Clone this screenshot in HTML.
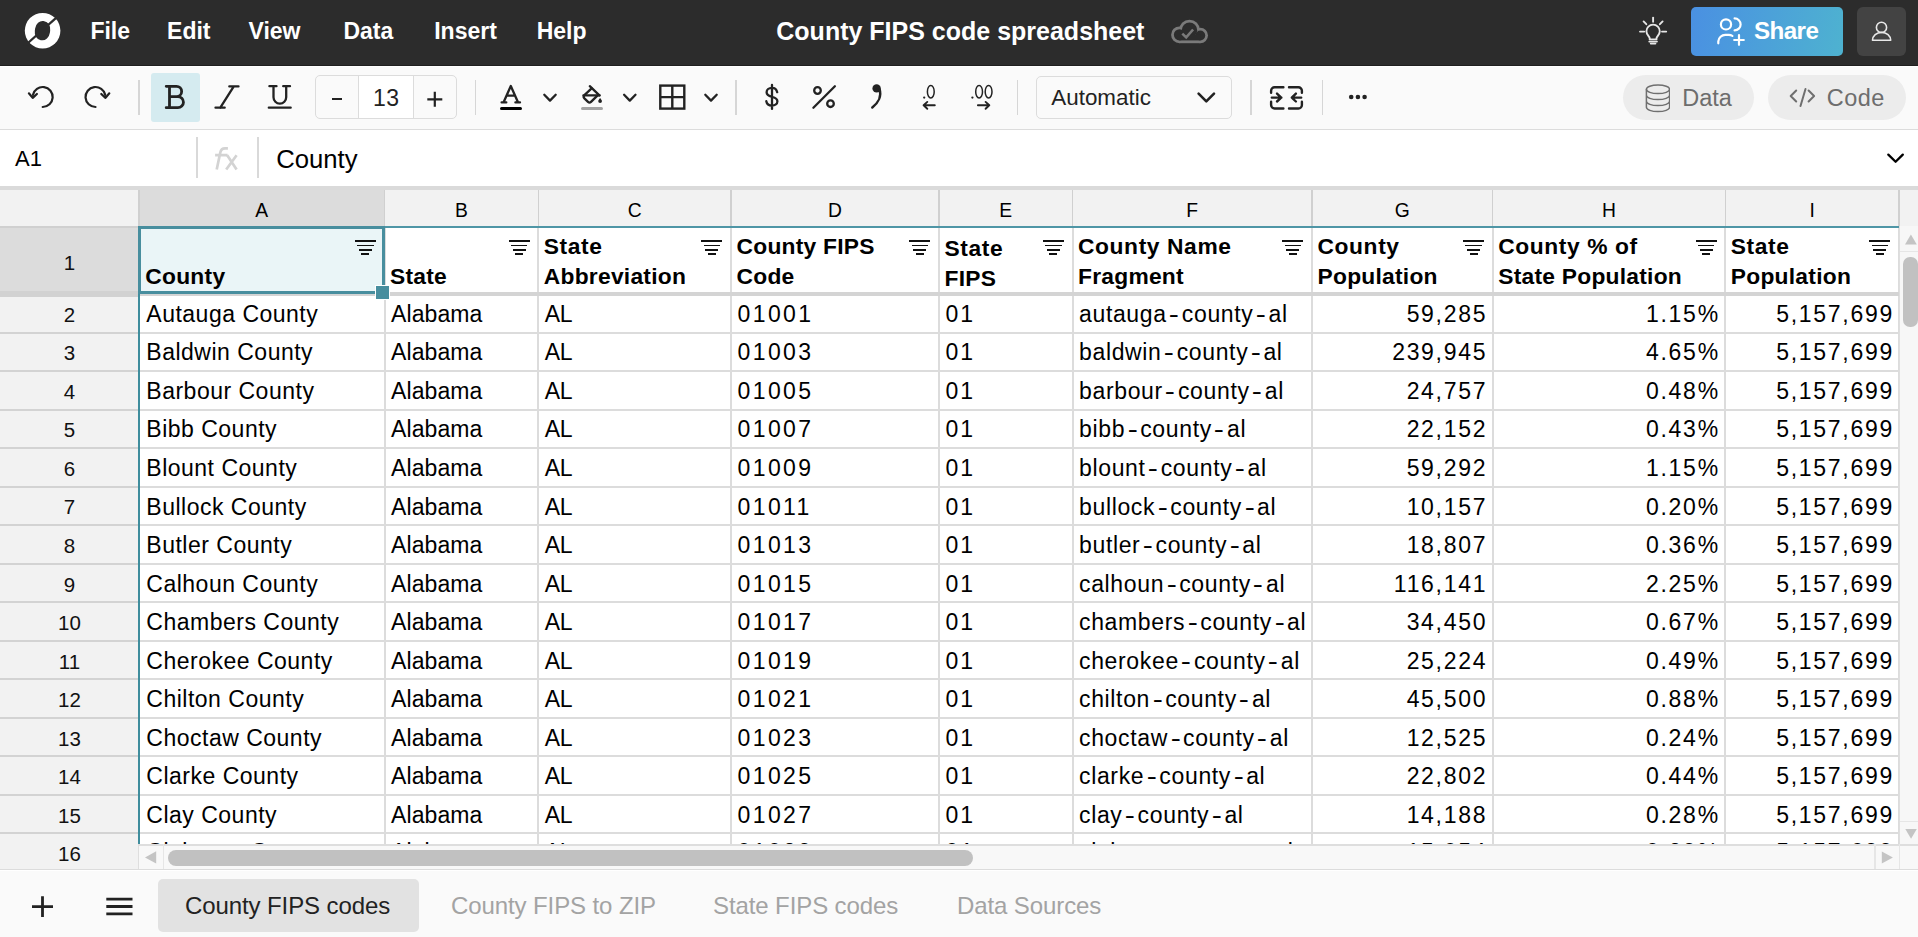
<!DOCTYPE html>
<html><head><meta charset="utf-8"><title>County FIPS code spreadsheet</title>
<style>
html,body{margin:0;padding:0;width:1918px;height:937px;overflow:hidden;background:#fff;}
body{position:relative;font-family:"Liberation Sans", sans-serif;}
.r{position:absolute;}
.t{position:absolute;white-space:pre;line-height:1;font-family:"Liberation Sans", sans-serif;}
.hy{display:inline-block;transform:scaleX(1.32);margin:0 3.2px 0 3.6px;}
</style></head><body>
<div class="r" style="left:0.00px;top:0.00px;width:1918.00px;height:65.70px;background:#2c2c2c;"></div>
<svg class="r" style="left:20px;top:8px;" width="46" height="46" viewBox="20 8 46 46" fill="none"><circle cx="42.6" cy="30.7" r="17.8" fill="#fff"/><rect x="34.9" y="21" width="15.2" height="19.3" rx="7.2" ry="8.6" transform="rotate(8 42.5 30.6)" fill="#2c2c2c"/><line x1="24" y1="46.5" x2="59.5" y2="14.8" stroke="#2c2c2c" stroke-width="2.3"/></svg>
<div class="t" style="top:19.53px;font-size:23px;font-weight:700;color:#fff;left:90.40px;">File</div>
<div class="t" style="top:19.53px;font-size:23px;font-weight:700;color:#fff;left:167.10px;">Edit</div>
<div class="t" style="top:19.53px;font-size:23px;font-weight:700;color:#fff;left:248.50px;">View</div>
<div class="t" style="top:19.53px;font-size:23px;font-weight:700;color:#fff;left:343.40px;">Data</div>
<div class="t" style="top:19.53px;font-size:23px;font-weight:700;color:#fff;left:434.20px;">Insert</div>
<div class="t" style="top:19.53px;font-size:23px;font-weight:700;color:#fff;left:536.70px;">Help</div>
<div class="t" style="top:18.64px;font-size:25px;font-weight:700;color:#fff;left:776.30px;">County FIPS code spreadsheet</div>
<svg class="r" style="left:1165px;top:14px;" width="48" height="34" viewBox="1165 14 48 34" fill="none"><g fill="#7a7a7a"><circle cx="1179.5" cy="34.8" r="8.4"/><circle cx="1189.5" cy="30.2" r="10.5"/><circle cx="1200.3" cy="35.5" r="7.7"/><rect x="1179.5" y="34.8" width="20.8" height="8.4"/></g><g fill="#2c2c2c"><circle cx="1179.5" cy="34.8" r="5.6"/><circle cx="1189.5" cy="30.2" r="7.7"/><circle cx="1200.3" cy="35.5" r="4.9"/><rect x="1179.5" y="34.8" width="20.8" height="5.6"/></g><path d="M1182.3 33.6 l3.9 3.8 l6.9 -7.9" stroke="#7a7a7a" stroke-width="2.6"/></svg>
<svg class="r" style="left:1635px;top:14px;" width="36" height="34" viewBox="1635 14 36 34" fill="none"><g stroke="#e6e6e6" stroke-width="1.9" stroke-linecap="round"><path d="M1649.7 39.4 V38.2 C1649.7 36.6 1646.4 34.9 1646.4 31.3 A6.7 6.7 0 0 1 1659.8 31.3 C1659.8 34.9 1656.5 36.6 1656.5 38.2 V39.4 Z" stroke-linejoin="round"/><line x1="1649.3" y1="41.6" x2="1656.9" y2="41.6"/><line x1="1650.8" y1="43.6" x2="1655.4" y2="43.6"/><line x1="1653.1" y1="17.6" x2="1653.1" y2="21.7"/><line x1="1643.6" y1="21.4" x2="1646.3" y2="24.2"/><line x1="1662.6" y1="21.4" x2="1659.9" y2="24.2"/><line x1="1640" y1="31.6" x2="1644.2" y2="31.6"/><line x1="1662" y1="31.6" x2="1666.2" y2="31.6"/></g></svg>
<div class="r" style="left:1691.00px;top:7.00px;width:152.00px;height:48.60px;background:linear-gradient(100deg,#4a90e2 0%,#4eb2d0 100%);border-radius:5px;"></div>
<svg class="r" style="left:1712px;top:14px;" width="34" height="34" viewBox="1712 14 34 34" fill="none"><g stroke="#fff" stroke-width="2.2" stroke-linecap="round"><circle cx="1726" cy="24.4" r="5.1"/><path d="M1734.6 18.4 a6 6 0 0 1 0 12"/><path d="M1718.3 43.3 v-2 a7 7 0 0 1 7 -6.4 h3.5 a8 8 0 0 1 3.6 1"/><path d="M1739 35.2 v9.6 M1734.2 40 h9.6"/></g></svg>
<div class="t" style="top:19.21px;font-size:24.2px;font-weight:700;color:#fff;letter-spacing:-0.55px;left:1753.90px;">Share</div>
<div class="r" style="left:1857.00px;top:7.00px;width:49.00px;height:48.60px;background:#434343;border-radius:6px;"></div>
<svg class="r" style="left:1866px;top:16px;" width="32" height="32" viewBox="1866 16 32 32" fill="none"><g stroke="#e8e8e8" stroke-width="1.6"><circle cx="1881.5" cy="27.4" r="5.1"/><path d="M1872.5 40.3 a9.1 8 0 0 1 18.2 0 z" stroke-linejoin="round"/></g></svg>
<div class="r" style="left:0.00px;top:65.00px;width:1918.00px;height:64.50px;background:#fafafa;"></div>
<div class="r" style="left:0.00px;top:65.70px;width:1918.00px;height:1.60px;background:#ffffff;"></div>
<div class="r" style="left:0.00px;top:64.70px;width:1918.00px;height:1.00px;background:#1f1f1f;"></div>
<div class="r" style="left:0.00px;top:129.00px;width:1918.00px;height:1.20px;background:#dcdcdc;"></div>
<div class="r" style="left:138.25px;top:80.00px;width:1.50px;height:35.00px;background:#d6d6d6;"></div>
<div class="r" style="left:474.75px;top:80.00px;width:1.50px;height:35.00px;background:#d6d6d6;"></div>
<div class="r" style="left:735.25px;top:80.00px;width:1.50px;height:35.00px;background:#d6d6d6;"></div>
<div class="r" style="left:1016.75px;top:80.00px;width:1.50px;height:35.00px;background:#d6d6d6;"></div>
<div class="r" style="left:1250.25px;top:80.00px;width:1.50px;height:35.00px;background:#d6d6d6;"></div>
<div class="r" style="left:1321.65px;top:80.00px;width:1.50px;height:35.00px;background:#d6d6d6;"></div>
<svg class="r" style="left:20px;top:76px;" width="100" height="40" viewBox="20 76 100 40" fill="none"><g stroke="#222" stroke-width="2.2" stroke-linecap="round" stroke-linejoin="round" fill="none"><path d="M42.7 107 A10 10 0 1 0 32.9 94.9"/><path d="M28.9 93.3 L32.7 97.9 L36.9 94"/><path d="M95.5 107 A10 10 0 1 1 105.3 94.9"/><path d="M109.3 93.3 L105.5 97.9 L101.3 94"/></g></svg>
<div class="r" style="left:151.20px;top:73.00px;width:48.50px;height:48.60px;background:#d5ebf0;border-radius:3px;"></div>
<svg class="r" style="left:150px;top:76px;" width="150" height="40" viewBox="150 76 150 40" fill="none"><g stroke="#222" stroke-linecap="round" stroke-linejoin="round" fill="none"><path stroke-width="2.8" d="M166.2 86.3 H176.5 A5.15 5.15 0 0 1 176.5 96.6 H169.5 M169.5 96.6 H177.9 A5.55 5.55 0 0 1 177.9 107.7 H166.2 M169.5 86.3 V107.7"/><path stroke-width="2.3" d="M229.3 86.4 H238.5 M215.5 107.7 H224.7 M233.8 86.4 L220.3 107.7"/><path stroke-width="2.3" d="M269.4 86.2 H276.5 M283.2 86.2 H290 M273.5 86.2 V97.2 A6.35 6.35 0 0 0 286.2 97.2 V86.2 M268.8 107.7 H290.7"/></g></svg>
<div class="r" style="left:315.40px;top:75.20px;width:141.30px;height:44.30px;background:#fafafa;border:1.2px solid #dcdcdc;border-radius:5px;box-sizing:border-box;"></div>
<div class="r" style="left:358.50px;top:76.20px;width:54.80px;height:42.30px;background:#fff;"></div>
<div class="r" style="left:358.00px;top:75.20px;width:1.20px;height:44.30px;background:#dcdcdc;"></div>
<div class="r" style="left:412.80px;top:75.20px;width:1.20px;height:44.30px;background:#dcdcdc;"></div>
<div class="r" style="left:332.00px;top:98.00px;width:9.80px;height:2.00px;background:#222;"></div>
<div class="t" style="top:86.53px;font-size:23px;font-weight:400;color:#222;letter-spacing:0.3px;left:86.20px;width:600px;text-align:center;">13</div>
<svg class="r" style="left:425px;top:89px;" width="20" height="20" viewBox="425 89 20 20" fill="none"><path d="M434.8 91.8 V106.8 M427.3 99.3 H442.3" stroke="#222" stroke-width="2.2" fill="none"/></svg>
<svg class="r" style="left:495px;top:80px;" width="230" height="34" viewBox="495 80 230 34" fill="none"><g stroke="#222" stroke-width="2.3" stroke-linecap="round" stroke-linejoin="round" fill="none"><path d="M503.6 102.3 L510.8 86 L518 102.3 M506.6 95.6 H515 M501.6 102.4 H506.3 M515.4 102.4 H520"/><path d="M544.3 94.8 L550 100.6 L555.7 94.8"/><path d="M589.8 86.2 L599.4 95.4"/><path d="M591.6 88.4 L584.4 95.2 Q582.9 96.8 584.4 98.4 L588 101.9 Q589.5 103.4 591 101.9 L597.6 95.4"/><path d="M583.4 95.4 H599.6"/><path d="M624.1 94.8 L629.8 100.6 L635.5 94.8"/><path d="M705.3 94.8 L711 100.6 L716.7 94.8"/></g><path d="M600.1 97.9 C599.3 99 598.2 100.1 598.2 101.1 A1.9 1.9 0 0 0 602 101.1 C602 100.1 600.9 99 600.1 97.9z" fill="#222"/></svg>
<div class="r" style="left:499.60px;top:107.20px;width:22.90px;height:3.00px;background:#000;border-radius:2px;"></div>
<div class="r" style="left:581.30px;top:107.30px;width:21.50px;height:2.60px;background:#a3a3a3;border-radius:2px;"></div>
<svg class="r" style="left:655px;top:80px;" width="36" height="34" viewBox="655 80 36 34" fill="none"><g stroke="#222" stroke-width="2.4" fill="none"><rect x="660.3" y="85.6" width="24" height="23"/><path d="M672.3 85.6 v23 M660.3 97.1 h24"/></g></svg>
<svg class="r" style="left:760px;top:80px;" width="24" height="34" viewBox="760 80 24 34" fill="none"><path d="M777.2 92.2 C776.6 89.5 774.5 87.9 772 87.9 C768.8 87.9 766.6 89.8 766.6 92.3 C766.6 95 769 96.1 772 96.8 C775 97.5 777.4 98.7 777.4 101.3 C777.4 103.9 775 105.6 772 105.6 C769 105.6 766.8 104 766.3 101.2 M772 84.9 V108.9" stroke="#222" stroke-width="2.3" stroke-linecap="round" fill="none"/></svg>
<svg class="r" style="left:805px;top:80px;" width="40" height="34" viewBox="805 80 40 34" fill="none"><g stroke="#222" stroke-width="2.3" stroke-linecap="round" fill="none"><path d="M813.4 107.8 L834.9 86.3"/><circle cx="817.5" cy="90.5" r="3.3"/><circle cx="830.5" cy="103.7" r="3.3"/></g></svg>
<svg class="r" style="left:862px;top:80px;" width="30" height="34" viewBox="862 80 30 34" fill="none"><circle cx="876.6" cy="88.4" r="4.2" fill="#222"/><path d="M879.6 89.5 C881.6 95.5 878.8 102.3 872.3 107.4" stroke="#222" stroke-width="2.5" stroke-linecap="round" fill="none"/></svg>
<svg class="r" style="left:915px;top:80px;" width="85" height="34" viewBox="915 80 85 34" fill="none"><g stroke="#222" stroke-linecap="round" stroke-linejoin="round" fill="none"><ellipse cx="930.8" cy="91.7" rx="3.4" ry="6.3" stroke-width="1.5"/><ellipse cx="979.1" cy="91.7" rx="3.4" ry="6.3" stroke-width="1.5"/><ellipse cx="988.6" cy="91.7" rx="3.4" ry="6.3" stroke-width="1.5"/><path stroke-width="1.9" d="M923.6 105.3 H934.8 M927.3 101.9 L923.6 105.3 L927.3 108.8"/><path stroke-width="1.9" d="M977.9 105.3 H989.3 M985.6 101.9 L989.3 105.3 L985.6 108.8"/></g><circle cx="924.2" cy="97.6" r="1.15" fill="#222"/><circle cx="972.4" cy="97.6" r="1.15" fill="#222"/></svg>
<div class="r" style="left:1036.20px;top:76.30px;width:195.60px;height:43.20px;background:#fafafa;border:1.2px solid #dcdcdc;border-radius:5px;box-sizing:border-box;"></div>
<div class="t" style="top:87.04px;font-size:22.4px;font-weight:400;color:#222;left:1051.30px;">Automatic</div>
<svg class="r" style="left:1190px;top:85px;" width="32" height="24" viewBox="1190 85 32 24" fill="none"><path d="M1198.6 93.7 l7.7 7.7 l7.7 -7.7" stroke="#222" stroke-width="2.6" stroke-linecap="round" stroke-linejoin="round" fill="none"/></svg>
<svg class="r" style="left:1265px;top:80px;" width="45" height="34" viewBox="1265 80 45 34" fill="none"><g stroke="#222" stroke-width="2.4" stroke-linecap="round" stroke-linejoin="round" fill="none"><path d="M1283.4 87.3 H1274.6 A3.5 3.5 0 0 0 1271.1 90.8 V92.7 M1271.1 101.8 V105 A3.5 3.5 0 0 0 1274.6 108.5 H1283.4"/><path d="M1289 87.3 H1298.4 A3.5 3.5 0 0 1 1301.9 90.8 V92.7 M1301.9 101.8 V105 A3.5 3.5 0 0 1 1298.4 108.5 H1289"/><path d="M1271.8 97.6 H1281.4 M1277 93.6 L1281.2 97.6 L1277 101.5 M1301.2 97.6 H1291.8 M1295.9 93.6 L1291.8 97.6 L1295.9 101.5"/></g></svg>
<svg class="r" style="left:1345px;top:90px;" width="26" height="14" viewBox="1345 90 26 14" fill="none"><g fill="#222"><circle cx="1351.2" cy="97" r="2.3"/><circle cx="1357.9" cy="97" r="2.3"/><circle cx="1364.6" cy="97" r="2.3"/></g></svg>
<div class="r" style="left:1623.00px;top:75.00px;width:130.60px;height:45.00px;background:#ececec;border-radius:23px;"></div>
<div class="r" style="left:1768.00px;top:75.00px;width:138.00px;height:45.00px;background:#ececec;border-radius:23px;"></div>
<svg class="r" style="left:1640px;top:80px;" width="30" height="34" viewBox="1640 80 30 34" fill="none"><g stroke="#6f6f6f" stroke-width="1.5" fill="none"><ellipse cx="1658" cy="89.3" rx="11.6" ry="4.3"/><path d="M1646.4 89.3 v18 a11.6 4.3 0 0 0 23.2 0 v-18 M1646.4 95.3 a11.6 4.3 0 0 0 23.2 0 M1646.4 101.3 a11.6 4.3 0 0 0 23.2 0"/></g></svg>
<div class="t" style="top:87.31px;font-size:23.5px;font-weight:400;color:#6d6d6d;left:1682.20px;">Data</div>
<svg class="r" style="left:1785px;top:82px;" width="36" height="30" viewBox="1785 82 36 30" fill="none"><g stroke="#6f6f6f" stroke-width="2" stroke-linecap="round" stroke-linejoin="round" fill="none"><path d="M1796.2 90.5 l-5.5 5.5 l5.5 5.5 M1808.6 90.5 l5.5 5.5 l-5.5 5.5 M1805.5 89 l-5 17"/></g></svg>
<div class="t" style="top:87.31px;font-size:23.5px;font-weight:400;color:#6d6d6d;letter-spacing:0.5px;left:1826.70px;">Code</div>
<div class="r" style="left:0.00px;top:130.20px;width:1918.00px;height:56.20px;background:#fff;"></div>
<div class="t" style="top:147.58px;font-size:22px;font-weight:400;color:#000;left:15.00px;">A1</div>
<div class="r" style="left:196.30px;top:137.40px;width:1.50px;height:41.00px;background:#d9d9d9;"></div>
<div class="r" style="left:257.30px;top:137.40px;width:1.50px;height:41.00px;background:#d9d9d9;"></div>
<svg class="r" style="left:210px;top:142px;" width="32" height="32" viewBox="210 142 32 32" fill="none"><g stroke="#d3d3d3" stroke-width="2.7" fill="none"><path d="M227.9 148.4 H225 C222.3 148.4 220.8 150 220.3 152.5 L216.7 169.5 M215.1 155.2 H227.6"/><path d="M227.2 155.2 L236.6 169.5 M236.6 155.2 L226.2 169.5"/></g></svg>
<div class="t" style="top:147.24px;font-size:25.7px;font-weight:400;color:#000;left:276.20px;">County</div>
<svg class="r" style="left:1880px;top:145px;" width="30" height="26" viewBox="1880 145 30 26" fill="none"><path d="M1888.3 154.6 l7.3 7.2 l7.2 -7.2" stroke="#000" stroke-width="2.3" stroke-linecap="round" stroke-linejoin="round" fill="none"/></svg>
<div class="r" style="left:0.00px;top:186.40px;width:1918.00px;height:3.80px;background:#dadada;"></div>
<div class="r" style="left:0.00px;top:190.20px;width:1918.00px;height:36.00px;background:#f2f2f2;"></div>
<div class="r" style="left:139.00px;top:190.20px;width:245.50px;height:36.00px;background:#dcdcdc;"></div>
<div class="r" style="left:138.25px;top:190.20px;width:1.50px;height:36.00px;background:#d0d0d0;"></div>
<div class="r" style="left:383.75px;top:190.20px;width:1.50px;height:36.00px;background:#d0d0d0;"></div>
<div class="r" style="left:537.55px;top:190.20px;width:1.50px;height:36.00px;background:#d0d0d0;"></div>
<div class="r" style="left:730.25px;top:190.20px;width:1.50px;height:36.00px;background:#d0d0d0;"></div>
<div class="r" style="left:938.25px;top:190.20px;width:1.50px;height:36.00px;background:#d0d0d0;"></div>
<div class="r" style="left:1071.75px;top:190.20px;width:1.50px;height:36.00px;background:#d0d0d0;"></div>
<div class="r" style="left:1311.25px;top:190.20px;width:1.50px;height:36.00px;background:#d0d0d0;"></div>
<div class="r" style="left:1491.95px;top:190.20px;width:1.50px;height:36.00px;background:#d0d0d0;"></div>
<div class="r" style="left:1724.55px;top:190.20px;width:1.50px;height:36.00px;background:#d0d0d0;"></div>
<div class="r" style="left:1898.25px;top:190.20px;width:1.50px;height:36.00px;background:#d0d0d0;"></div>
<div class="t" style="top:200.86px;font-size:19.3px;font-weight:400;color:#000;left:-38.25px;width:600px;text-align:center;">A</div>
<div class="t" style="top:200.86px;font-size:19.3px;font-weight:400;color:#000;left:161.40px;width:600px;text-align:center;">B</div>
<div class="t" style="top:200.86px;font-size:19.3px;font-weight:400;color:#000;left:334.65px;width:600px;text-align:center;">C</div>
<div class="t" style="top:200.86px;font-size:19.3px;font-weight:400;color:#000;left:535.00px;width:600px;text-align:center;">D</div>
<div class="t" style="top:200.86px;font-size:19.3px;font-weight:400;color:#000;left:705.75px;width:600px;text-align:center;">E</div>
<div class="t" style="top:200.86px;font-size:19.3px;font-weight:400;color:#000;left:892.25px;width:600px;text-align:center;">F</div>
<div class="t" style="top:200.86px;font-size:19.3px;font-weight:400;color:#000;left:1102.35px;width:600px;text-align:center;">G</div>
<div class="t" style="top:200.86px;font-size:19.3px;font-weight:400;color:#000;left:1309.00px;width:600px;text-align:center;">H</div>
<div class="t" style="top:200.86px;font-size:19.3px;font-weight:400;color:#000;left:1512.15px;width:600px;text-align:center;">I</div>
<div class="r" style="left:0.00px;top:226.20px;width:139.00px;height:643.10px;background:#f2f2f2;"></div>
<div class="r" style="left:139.00px;top:226.20px;width:1760.00px;height:618.10px;background:#fff;"></div>
<div class="r" style="left:0.00px;top:226.20px;width:139.00px;height:65.00px;background:#dcdcdc;"></div>
<div class="r" style="left:0.00px;top:226.00px;width:139.00px;height:2.00px;background:#d0d0d0;"></div>
<div class="t" style="top:252.85px;font-size:20.5px;font-weight:400;color:#111;left:-230.60px;width:600px;text-align:center;">1</div>
<div class="r" style="left:139.00px;top:226.20px;width:245.50px;height:68.00px;background:#eaf5f7;"></div>
<div class="t" style="top:265.30px;font-size:22.8px;font-weight:700;color:#000;letter-spacing:0.25px;left:145.30px;">County</div>
<div class="r" style="left:354.90px;top:240.20px;width:21.00px;height:1.70px;background:#111;"></div>
<div class="r" style="left:357.10px;top:244.60px;width:16.60px;height:1.70px;background:#111;"></div>
<div class="r" style="left:358.80px;top:249.00px;width:13.20px;height:1.70px;background:#111;"></div>
<div class="r" style="left:361.40px;top:253.20px;width:8.00px;height:1.70px;background:#111;"></div>
<div class="t" style="top:265.30px;font-size:22.8px;font-weight:700;color:#000;letter-spacing:0.25px;left:390.00px;">State</div>
<div class="r" style="left:508.70px;top:240.20px;width:21.00px;height:1.70px;background:#111;"></div>
<div class="r" style="left:510.90px;top:244.60px;width:16.60px;height:1.70px;background:#111;"></div>
<div class="r" style="left:512.60px;top:249.00px;width:13.20px;height:1.70px;background:#111;"></div>
<div class="r" style="left:515.20px;top:253.20px;width:8.00px;height:1.70px;background:#111;"></div>
<div class="t" style="top:235.30px;font-size:22.8px;font-weight:700;color:#000;letter-spacing:0.6px;left:543.80px;">State</div>
<div class="t" style="top:265.30px;font-size:22.8px;font-weight:700;color:#000;letter-spacing:0.25px;left:543.80px;">Abbreviation</div>
<div class="r" style="left:701.40px;top:240.20px;width:21.00px;height:1.70px;background:#111;"></div>
<div class="r" style="left:703.60px;top:244.60px;width:16.60px;height:1.70px;background:#111;"></div>
<div class="r" style="left:705.30px;top:249.00px;width:13.20px;height:1.70px;background:#111;"></div>
<div class="r" style="left:707.90px;top:253.20px;width:8.00px;height:1.70px;background:#111;"></div>
<div class="t" style="top:235.30px;font-size:22.8px;font-weight:700;color:#000;letter-spacing:0.25px;left:736.50px;">County FIPS</div>
<div class="t" style="top:265.30px;font-size:22.8px;font-weight:700;color:#000;letter-spacing:0.25px;left:736.50px;">Code</div>
<div class="r" style="left:909.40px;top:240.20px;width:21.00px;height:1.70px;background:#111;"></div>
<div class="r" style="left:911.60px;top:244.60px;width:16.60px;height:1.70px;background:#111;"></div>
<div class="r" style="left:913.30px;top:249.00px;width:13.20px;height:1.70px;background:#111;"></div>
<div class="r" style="left:915.90px;top:253.20px;width:8.00px;height:1.70px;background:#111;"></div>
<div class="t" style="top:236.90px;font-size:22.8px;font-weight:700;color:#000;letter-spacing:0.6px;left:944.50px;">State</div>
<div class="t" style="top:266.90px;font-size:22.8px;font-weight:700;color:#000;letter-spacing:0.25px;left:944.50px;">FIPS</div>
<div class="r" style="left:1042.90px;top:240.20px;width:21.00px;height:1.70px;background:#111;"></div>
<div class="r" style="left:1045.10px;top:244.60px;width:16.60px;height:1.70px;background:#111;"></div>
<div class="r" style="left:1046.80px;top:249.00px;width:13.20px;height:1.70px;background:#111;"></div>
<div class="r" style="left:1049.40px;top:253.20px;width:8.00px;height:1.70px;background:#111;"></div>
<div class="t" style="top:235.30px;font-size:22.8px;font-weight:700;color:#000;letter-spacing:0.6px;left:1078.00px;">County Name</div>
<div class="t" style="top:265.30px;font-size:22.8px;font-weight:700;color:#000;letter-spacing:0.25px;left:1078.00px;">Fragment</div>
<div class="r" style="left:1282.40px;top:240.20px;width:21.00px;height:1.70px;background:#111;"></div>
<div class="r" style="left:1284.60px;top:244.60px;width:16.60px;height:1.70px;background:#111;"></div>
<div class="r" style="left:1286.30px;top:249.00px;width:13.20px;height:1.70px;background:#111;"></div>
<div class="r" style="left:1288.90px;top:253.20px;width:8.00px;height:1.70px;background:#111;"></div>
<div class="t" style="top:235.30px;font-size:22.8px;font-weight:700;color:#000;letter-spacing:0.6px;left:1317.50px;">County</div>
<div class="t" style="top:265.30px;font-size:22.8px;font-weight:700;color:#000;letter-spacing:0.25px;left:1317.50px;">Population</div>
<div class="r" style="left:1463.10px;top:240.20px;width:21.00px;height:1.70px;background:#111;"></div>
<div class="r" style="left:1465.30px;top:244.60px;width:16.60px;height:1.70px;background:#111;"></div>
<div class="r" style="left:1467.00px;top:249.00px;width:13.20px;height:1.70px;background:#111;"></div>
<div class="r" style="left:1469.60px;top:253.20px;width:8.00px;height:1.70px;background:#111;"></div>
<div class="t" style="top:235.30px;font-size:22.8px;font-weight:700;color:#000;letter-spacing:0.6px;left:1498.20px;">County % of</div>
<div class="t" style="top:265.30px;font-size:22.8px;font-weight:700;color:#000;letter-spacing:0.25px;left:1498.20px;">State Population</div>
<div class="r" style="left:1695.70px;top:240.20px;width:21.00px;height:1.70px;background:#111;"></div>
<div class="r" style="left:1697.90px;top:244.60px;width:16.60px;height:1.70px;background:#111;"></div>
<div class="r" style="left:1699.60px;top:249.00px;width:13.20px;height:1.70px;background:#111;"></div>
<div class="r" style="left:1702.20px;top:253.20px;width:8.00px;height:1.70px;background:#111;"></div>
<div class="t" style="top:235.30px;font-size:22.8px;font-weight:700;color:#000;letter-spacing:0.6px;left:1730.80px;">State</div>
<div class="t" style="top:265.30px;font-size:22.8px;font-weight:700;color:#000;letter-spacing:0.25px;left:1730.80px;">Population</div>
<div class="r" style="left:1869.40px;top:240.20px;width:21.00px;height:1.70px;background:#111;"></div>
<div class="r" style="left:1871.60px;top:244.60px;width:16.60px;height:1.70px;background:#111;"></div>
<div class="r" style="left:1873.30px;top:249.00px;width:13.20px;height:1.70px;background:#111;"></div>
<div class="r" style="left:1875.90px;top:253.20px;width:8.00px;height:1.70px;background:#111;"></div>
<div class="r" style="left:0;top:0;width:1918px;height:845px;overflow:hidden">
<div class="t" style="top:302.83px;font-size:23px;font-weight:400;color:#000;letter-spacing:0.5px;left:146.30px;">Autauga County</div>
<div class="t" style="top:302.83px;font-size:23px;font-weight:400;color:#000;letter-spacing:0.1px;left:391.00px;">Alabama</div>
<div class="t" style="top:302.83px;font-size:23px;font-weight:400;color:#000;letter-spacing:-0.5px;left:544.80px;">AL</div>
<div class="t" style="top:302.83px;font-size:23px;font-weight:400;color:#000;letter-spacing:2.4px;left:737.50px;">01001</div>
<div class="t" style="top:302.83px;font-size:23px;font-weight:400;color:#000;letter-spacing:1.9px;left:945.50px;">01</div>
<div class="t" style="top:302.83px;font-size:23px;font-weight:400;color:#000;letter-spacing:0.65px;left:1079.00px;">autauga<span class="hy">-</span>county<span class="hy">-</span>al</div>
<div class="t" style="top:302.83px;font-size:23px;font-weight:400;color:#000;letter-spacing:1.7px;right:432.50px;margin-right:-1.7px;">59,285</div>
<div class="t" style="top:302.83px;font-size:23px;font-weight:400;color:#000;letter-spacing:1.75px;right:199.90px;margin-right:-1.75px;">1.15%</div>
<div class="t" style="top:302.83px;font-size:23px;font-weight:400;color:#000;letter-spacing:1.7px;right:25.80px;margin-right:-1.7px;">5,157,699</div>
<div class="t" style="top:341.38px;font-size:23px;font-weight:400;color:#000;letter-spacing:0.5px;left:146.30px;">Baldwin County</div>
<div class="t" style="top:341.38px;font-size:23px;font-weight:400;color:#000;letter-spacing:0.1px;left:391.00px;">Alabama</div>
<div class="t" style="top:341.38px;font-size:23px;font-weight:400;color:#000;letter-spacing:-0.5px;left:544.80px;">AL</div>
<div class="t" style="top:341.38px;font-size:23px;font-weight:400;color:#000;letter-spacing:2.4px;left:737.50px;">01003</div>
<div class="t" style="top:341.38px;font-size:23px;font-weight:400;color:#000;letter-spacing:1.9px;left:945.50px;">01</div>
<div class="t" style="top:341.38px;font-size:23px;font-weight:400;color:#000;letter-spacing:0.65px;left:1079.00px;">baldwin<span class="hy">-</span>county<span class="hy">-</span>al</div>
<div class="t" style="top:341.38px;font-size:23px;font-weight:400;color:#000;letter-spacing:1.7px;right:432.50px;margin-right:-1.7px;">239,945</div>
<div class="t" style="top:341.38px;font-size:23px;font-weight:400;color:#000;letter-spacing:1.75px;right:199.90px;margin-right:-1.75px;">4.65%</div>
<div class="t" style="top:341.38px;font-size:23px;font-weight:400;color:#000;letter-spacing:1.7px;right:25.80px;margin-right:-1.7px;">5,157,699</div>
<div class="t" style="top:379.93px;font-size:23px;font-weight:400;color:#000;letter-spacing:0.5px;left:146.30px;">Barbour County</div>
<div class="t" style="top:379.93px;font-size:23px;font-weight:400;color:#000;letter-spacing:0.1px;left:391.00px;">Alabama</div>
<div class="t" style="top:379.93px;font-size:23px;font-weight:400;color:#000;letter-spacing:-0.5px;left:544.80px;">AL</div>
<div class="t" style="top:379.93px;font-size:23px;font-weight:400;color:#000;letter-spacing:2.4px;left:737.50px;">01005</div>
<div class="t" style="top:379.93px;font-size:23px;font-weight:400;color:#000;letter-spacing:1.9px;left:945.50px;">01</div>
<div class="t" style="top:379.93px;font-size:23px;font-weight:400;color:#000;letter-spacing:0.65px;left:1079.00px;">barbour<span class="hy">-</span>county<span class="hy">-</span>al</div>
<div class="t" style="top:379.93px;font-size:23px;font-weight:400;color:#000;letter-spacing:1.7px;right:432.50px;margin-right:-1.7px;">24,757</div>
<div class="t" style="top:379.93px;font-size:23px;font-weight:400;color:#000;letter-spacing:1.75px;right:199.90px;margin-right:-1.75px;">0.48%</div>
<div class="t" style="top:379.93px;font-size:23px;font-weight:400;color:#000;letter-spacing:1.7px;right:25.80px;margin-right:-1.7px;">5,157,699</div>
<div class="t" style="top:418.48px;font-size:23px;font-weight:400;color:#000;letter-spacing:0.5px;left:146.30px;">Bibb County</div>
<div class="t" style="top:418.48px;font-size:23px;font-weight:400;color:#000;letter-spacing:0.1px;left:391.00px;">Alabama</div>
<div class="t" style="top:418.48px;font-size:23px;font-weight:400;color:#000;letter-spacing:-0.5px;left:544.80px;">AL</div>
<div class="t" style="top:418.48px;font-size:23px;font-weight:400;color:#000;letter-spacing:2.4px;left:737.50px;">01007</div>
<div class="t" style="top:418.48px;font-size:23px;font-weight:400;color:#000;letter-spacing:1.9px;left:945.50px;">01</div>
<div class="t" style="top:418.48px;font-size:23px;font-weight:400;color:#000;letter-spacing:0.65px;left:1079.00px;">bibb<span class="hy">-</span>county<span class="hy">-</span>al</div>
<div class="t" style="top:418.48px;font-size:23px;font-weight:400;color:#000;letter-spacing:1.7px;right:432.50px;margin-right:-1.7px;">22,152</div>
<div class="t" style="top:418.48px;font-size:23px;font-weight:400;color:#000;letter-spacing:1.75px;right:199.90px;margin-right:-1.75px;">0.43%</div>
<div class="t" style="top:418.48px;font-size:23px;font-weight:400;color:#000;letter-spacing:1.7px;right:25.80px;margin-right:-1.7px;">5,157,699</div>
<div class="t" style="top:457.03px;font-size:23px;font-weight:400;color:#000;letter-spacing:0.5px;left:146.30px;">Blount County</div>
<div class="t" style="top:457.03px;font-size:23px;font-weight:400;color:#000;letter-spacing:0.1px;left:391.00px;">Alabama</div>
<div class="t" style="top:457.03px;font-size:23px;font-weight:400;color:#000;letter-spacing:-0.5px;left:544.80px;">AL</div>
<div class="t" style="top:457.03px;font-size:23px;font-weight:400;color:#000;letter-spacing:2.4px;left:737.50px;">01009</div>
<div class="t" style="top:457.03px;font-size:23px;font-weight:400;color:#000;letter-spacing:1.9px;left:945.50px;">01</div>
<div class="t" style="top:457.03px;font-size:23px;font-weight:400;color:#000;letter-spacing:0.65px;left:1079.00px;">blount<span class="hy">-</span>county<span class="hy">-</span>al</div>
<div class="t" style="top:457.03px;font-size:23px;font-weight:400;color:#000;letter-spacing:1.7px;right:432.50px;margin-right:-1.7px;">59,292</div>
<div class="t" style="top:457.03px;font-size:23px;font-weight:400;color:#000;letter-spacing:1.75px;right:199.90px;margin-right:-1.75px;">1.15%</div>
<div class="t" style="top:457.03px;font-size:23px;font-weight:400;color:#000;letter-spacing:1.7px;right:25.80px;margin-right:-1.7px;">5,157,699</div>
<div class="t" style="top:495.58px;font-size:23px;font-weight:400;color:#000;letter-spacing:0.5px;left:146.30px;">Bullock County</div>
<div class="t" style="top:495.58px;font-size:23px;font-weight:400;color:#000;letter-spacing:0.1px;left:391.00px;">Alabama</div>
<div class="t" style="top:495.58px;font-size:23px;font-weight:400;color:#000;letter-spacing:-0.5px;left:544.80px;">AL</div>
<div class="t" style="top:495.58px;font-size:23px;font-weight:400;color:#000;letter-spacing:2.4px;left:737.50px;">01011</div>
<div class="t" style="top:495.58px;font-size:23px;font-weight:400;color:#000;letter-spacing:1.9px;left:945.50px;">01</div>
<div class="t" style="top:495.58px;font-size:23px;font-weight:400;color:#000;letter-spacing:0.65px;left:1079.00px;">bullock<span class="hy">-</span>county<span class="hy">-</span>al</div>
<div class="t" style="top:495.58px;font-size:23px;font-weight:400;color:#000;letter-spacing:1.7px;right:432.50px;margin-right:-1.7px;">10,157</div>
<div class="t" style="top:495.58px;font-size:23px;font-weight:400;color:#000;letter-spacing:1.75px;right:199.90px;margin-right:-1.75px;">0.20%</div>
<div class="t" style="top:495.58px;font-size:23px;font-weight:400;color:#000;letter-spacing:1.7px;right:25.80px;margin-right:-1.7px;">5,157,699</div>
<div class="t" style="top:534.13px;font-size:23px;font-weight:400;color:#000;letter-spacing:0.5px;left:146.30px;">Butler County</div>
<div class="t" style="top:534.13px;font-size:23px;font-weight:400;color:#000;letter-spacing:0.1px;left:391.00px;">Alabama</div>
<div class="t" style="top:534.13px;font-size:23px;font-weight:400;color:#000;letter-spacing:-0.5px;left:544.80px;">AL</div>
<div class="t" style="top:534.13px;font-size:23px;font-weight:400;color:#000;letter-spacing:2.4px;left:737.50px;">01013</div>
<div class="t" style="top:534.13px;font-size:23px;font-weight:400;color:#000;letter-spacing:1.9px;left:945.50px;">01</div>
<div class="t" style="top:534.13px;font-size:23px;font-weight:400;color:#000;letter-spacing:0.65px;left:1079.00px;">butler<span class="hy">-</span>county<span class="hy">-</span>al</div>
<div class="t" style="top:534.13px;font-size:23px;font-weight:400;color:#000;letter-spacing:1.7px;right:432.50px;margin-right:-1.7px;">18,807</div>
<div class="t" style="top:534.13px;font-size:23px;font-weight:400;color:#000;letter-spacing:1.75px;right:199.90px;margin-right:-1.75px;">0.36%</div>
<div class="t" style="top:534.13px;font-size:23px;font-weight:400;color:#000;letter-spacing:1.7px;right:25.80px;margin-right:-1.7px;">5,157,699</div>
<div class="t" style="top:572.68px;font-size:23px;font-weight:400;color:#000;letter-spacing:0.5px;left:146.30px;">Calhoun County</div>
<div class="t" style="top:572.68px;font-size:23px;font-weight:400;color:#000;letter-spacing:0.1px;left:391.00px;">Alabama</div>
<div class="t" style="top:572.68px;font-size:23px;font-weight:400;color:#000;letter-spacing:-0.5px;left:544.80px;">AL</div>
<div class="t" style="top:572.68px;font-size:23px;font-weight:400;color:#000;letter-spacing:2.4px;left:737.50px;">01015</div>
<div class="t" style="top:572.68px;font-size:23px;font-weight:400;color:#000;letter-spacing:1.9px;left:945.50px;">01</div>
<div class="t" style="top:572.68px;font-size:23px;font-weight:400;color:#000;letter-spacing:0.65px;left:1079.00px;">calhoun<span class="hy">-</span>county<span class="hy">-</span>al</div>
<div class="t" style="top:572.68px;font-size:23px;font-weight:400;color:#000;letter-spacing:1.7px;right:432.50px;margin-right:-1.7px;">116,141</div>
<div class="t" style="top:572.68px;font-size:23px;font-weight:400;color:#000;letter-spacing:1.75px;right:199.90px;margin-right:-1.75px;">2.25%</div>
<div class="t" style="top:572.68px;font-size:23px;font-weight:400;color:#000;letter-spacing:1.7px;right:25.80px;margin-right:-1.7px;">5,157,699</div>
<div class="t" style="top:611.23px;font-size:23px;font-weight:400;color:#000;letter-spacing:0.5px;left:146.30px;">Chambers County</div>
<div class="t" style="top:611.23px;font-size:23px;font-weight:400;color:#000;letter-spacing:0.1px;left:391.00px;">Alabama</div>
<div class="t" style="top:611.23px;font-size:23px;font-weight:400;color:#000;letter-spacing:-0.5px;left:544.80px;">AL</div>
<div class="t" style="top:611.23px;font-size:23px;font-weight:400;color:#000;letter-spacing:2.4px;left:737.50px;">01017</div>
<div class="t" style="top:611.23px;font-size:23px;font-weight:400;color:#000;letter-spacing:1.9px;left:945.50px;">01</div>
<div class="t" style="top:611.23px;font-size:23px;font-weight:400;color:#000;letter-spacing:0.65px;left:1079.00px;">chambers<span class="hy">-</span>county<span class="hy">-</span>al</div>
<div class="t" style="top:611.23px;font-size:23px;font-weight:400;color:#000;letter-spacing:1.7px;right:432.50px;margin-right:-1.7px;">34,450</div>
<div class="t" style="top:611.23px;font-size:23px;font-weight:400;color:#000;letter-spacing:1.75px;right:199.90px;margin-right:-1.75px;">0.67%</div>
<div class="t" style="top:611.23px;font-size:23px;font-weight:400;color:#000;letter-spacing:1.7px;right:25.80px;margin-right:-1.7px;">5,157,699</div>
<div class="t" style="top:649.78px;font-size:23px;font-weight:400;color:#000;letter-spacing:0.5px;left:146.30px;">Cherokee County</div>
<div class="t" style="top:649.78px;font-size:23px;font-weight:400;color:#000;letter-spacing:0.1px;left:391.00px;">Alabama</div>
<div class="t" style="top:649.78px;font-size:23px;font-weight:400;color:#000;letter-spacing:-0.5px;left:544.80px;">AL</div>
<div class="t" style="top:649.78px;font-size:23px;font-weight:400;color:#000;letter-spacing:2.4px;left:737.50px;">01019</div>
<div class="t" style="top:649.78px;font-size:23px;font-weight:400;color:#000;letter-spacing:1.9px;left:945.50px;">01</div>
<div class="t" style="top:649.78px;font-size:23px;font-weight:400;color:#000;letter-spacing:0.65px;left:1079.00px;">cherokee<span class="hy">-</span>county<span class="hy">-</span>al</div>
<div class="t" style="top:649.78px;font-size:23px;font-weight:400;color:#000;letter-spacing:1.7px;right:432.50px;margin-right:-1.7px;">25,224</div>
<div class="t" style="top:649.78px;font-size:23px;font-weight:400;color:#000;letter-spacing:1.75px;right:199.90px;margin-right:-1.75px;">0.49%</div>
<div class="t" style="top:649.78px;font-size:23px;font-weight:400;color:#000;letter-spacing:1.7px;right:25.80px;margin-right:-1.7px;">5,157,699</div>
<div class="t" style="top:688.33px;font-size:23px;font-weight:400;color:#000;letter-spacing:0.5px;left:146.30px;">Chilton County</div>
<div class="t" style="top:688.33px;font-size:23px;font-weight:400;color:#000;letter-spacing:0.1px;left:391.00px;">Alabama</div>
<div class="t" style="top:688.33px;font-size:23px;font-weight:400;color:#000;letter-spacing:-0.5px;left:544.80px;">AL</div>
<div class="t" style="top:688.33px;font-size:23px;font-weight:400;color:#000;letter-spacing:2.4px;left:737.50px;">01021</div>
<div class="t" style="top:688.33px;font-size:23px;font-weight:400;color:#000;letter-spacing:1.9px;left:945.50px;">01</div>
<div class="t" style="top:688.33px;font-size:23px;font-weight:400;color:#000;letter-spacing:0.65px;left:1079.00px;">chilton<span class="hy">-</span>county<span class="hy">-</span>al</div>
<div class="t" style="top:688.33px;font-size:23px;font-weight:400;color:#000;letter-spacing:1.7px;right:432.50px;margin-right:-1.7px;">45,500</div>
<div class="t" style="top:688.33px;font-size:23px;font-weight:400;color:#000;letter-spacing:1.75px;right:199.90px;margin-right:-1.75px;">0.88%</div>
<div class="t" style="top:688.33px;font-size:23px;font-weight:400;color:#000;letter-spacing:1.7px;right:25.80px;margin-right:-1.7px;">5,157,699</div>
<div class="t" style="top:726.88px;font-size:23px;font-weight:400;color:#000;letter-spacing:0.5px;left:146.30px;">Choctaw County</div>
<div class="t" style="top:726.88px;font-size:23px;font-weight:400;color:#000;letter-spacing:0.1px;left:391.00px;">Alabama</div>
<div class="t" style="top:726.88px;font-size:23px;font-weight:400;color:#000;letter-spacing:-0.5px;left:544.80px;">AL</div>
<div class="t" style="top:726.88px;font-size:23px;font-weight:400;color:#000;letter-spacing:2.4px;left:737.50px;">01023</div>
<div class="t" style="top:726.88px;font-size:23px;font-weight:400;color:#000;letter-spacing:1.9px;left:945.50px;">01</div>
<div class="t" style="top:726.88px;font-size:23px;font-weight:400;color:#000;letter-spacing:0.65px;left:1079.00px;">choctaw<span class="hy">-</span>county<span class="hy">-</span>al</div>
<div class="t" style="top:726.88px;font-size:23px;font-weight:400;color:#000;letter-spacing:1.7px;right:432.50px;margin-right:-1.7px;">12,525</div>
<div class="t" style="top:726.88px;font-size:23px;font-weight:400;color:#000;letter-spacing:1.75px;right:199.90px;margin-right:-1.75px;">0.24%</div>
<div class="t" style="top:726.88px;font-size:23px;font-weight:400;color:#000;letter-spacing:1.7px;right:25.80px;margin-right:-1.7px;">5,157,699</div>
<div class="t" style="top:765.43px;font-size:23px;font-weight:400;color:#000;letter-spacing:0.5px;left:146.30px;">Clarke County</div>
<div class="t" style="top:765.43px;font-size:23px;font-weight:400;color:#000;letter-spacing:0.1px;left:391.00px;">Alabama</div>
<div class="t" style="top:765.43px;font-size:23px;font-weight:400;color:#000;letter-spacing:-0.5px;left:544.80px;">AL</div>
<div class="t" style="top:765.43px;font-size:23px;font-weight:400;color:#000;letter-spacing:2.4px;left:737.50px;">01025</div>
<div class="t" style="top:765.43px;font-size:23px;font-weight:400;color:#000;letter-spacing:1.9px;left:945.50px;">01</div>
<div class="t" style="top:765.43px;font-size:23px;font-weight:400;color:#000;letter-spacing:0.65px;left:1079.00px;">clarke<span class="hy">-</span>county<span class="hy">-</span>al</div>
<div class="t" style="top:765.43px;font-size:23px;font-weight:400;color:#000;letter-spacing:1.7px;right:432.50px;margin-right:-1.7px;">22,802</div>
<div class="t" style="top:765.43px;font-size:23px;font-weight:400;color:#000;letter-spacing:1.75px;right:199.90px;margin-right:-1.75px;">0.44%</div>
<div class="t" style="top:765.43px;font-size:23px;font-weight:400;color:#000;letter-spacing:1.7px;right:25.80px;margin-right:-1.7px;">5,157,699</div>
<div class="t" style="top:803.98px;font-size:23px;font-weight:400;color:#000;letter-spacing:0.5px;left:146.30px;">Clay County</div>
<div class="t" style="top:803.98px;font-size:23px;font-weight:400;color:#000;letter-spacing:0.1px;left:391.00px;">Alabama</div>
<div class="t" style="top:803.98px;font-size:23px;font-weight:400;color:#000;letter-spacing:-0.5px;left:544.80px;">AL</div>
<div class="t" style="top:803.98px;font-size:23px;font-weight:400;color:#000;letter-spacing:2.4px;left:737.50px;">01027</div>
<div class="t" style="top:803.98px;font-size:23px;font-weight:400;color:#000;letter-spacing:1.9px;left:945.50px;">01</div>
<div class="t" style="top:803.98px;font-size:23px;font-weight:400;color:#000;letter-spacing:0.65px;left:1079.00px;">clay<span class="hy">-</span>county<span class="hy">-</span>al</div>
<div class="t" style="top:803.98px;font-size:23px;font-weight:400;color:#000;letter-spacing:1.7px;right:432.50px;margin-right:-1.7px;">14,188</div>
<div class="t" style="top:803.98px;font-size:23px;font-weight:400;color:#000;letter-spacing:1.75px;right:199.90px;margin-right:-1.75px;">0.28%</div>
<div class="t" style="top:803.98px;font-size:23px;font-weight:400;color:#000;letter-spacing:1.7px;right:25.80px;margin-right:-1.7px;">5,157,699</div>
<div class="t" style="top:841.13px;font-size:23px;font-weight:400;color:#000;letter-spacing:0.5px;left:146.30px;">Cleburne County</div>
<div class="t" style="top:841.13px;font-size:23px;font-weight:400;color:#000;letter-spacing:0.1px;left:391.00px;">Alabama</div>
<div class="t" style="top:841.13px;font-size:23px;font-weight:400;color:#000;letter-spacing:-0.5px;left:544.80px;">AL</div>
<div class="t" style="top:841.13px;font-size:23px;font-weight:400;color:#000;letter-spacing:2.4px;left:737.50px;">01029</div>
<div class="t" style="top:841.13px;font-size:23px;font-weight:400;color:#000;letter-spacing:1.9px;left:945.50px;">01</div>
<div class="t" style="top:841.13px;font-size:23px;font-weight:400;color:#000;letter-spacing:0.65px;left:1079.00px;">cleburne<span class="hy">-</span>county<span class="hy">-</span>al</div>
<div class="t" style="top:841.13px;font-size:23px;font-weight:400;color:#000;letter-spacing:1.7px;right:432.50px;margin-right:-1.7px;">15,054</div>
<div class="t" style="top:841.13px;font-size:23px;font-weight:400;color:#000;letter-spacing:1.75px;right:199.90px;margin-right:-1.75px;">0.29%</div>
<div class="t" style="top:841.13px;font-size:23px;font-weight:400;color:#000;letter-spacing:1.7px;right:25.80px;margin-right:-1.7px;">5,157,699</div>
</div>
<div class="t" style="top:304.65px;font-size:20.5px;font-weight:400;color:#111;left:-230.60px;width:600px;text-align:center;">2</div>
<div class="t" style="top:343.20px;font-size:20.5px;font-weight:400;color:#111;left:-230.60px;width:600px;text-align:center;">3</div>
<div class="t" style="top:381.75px;font-size:20.5px;font-weight:400;color:#111;left:-230.60px;width:600px;text-align:center;">4</div>
<div class="t" style="top:420.30px;font-size:20.5px;font-weight:400;color:#111;left:-230.60px;width:600px;text-align:center;">5</div>
<div class="t" style="top:458.85px;font-size:20.5px;font-weight:400;color:#111;left:-230.60px;width:600px;text-align:center;">6</div>
<div class="t" style="top:497.40px;font-size:20.5px;font-weight:400;color:#111;left:-230.60px;width:600px;text-align:center;">7</div>
<div class="t" style="top:535.95px;font-size:20.5px;font-weight:400;color:#111;left:-230.60px;width:600px;text-align:center;">8</div>
<div class="t" style="top:574.50px;font-size:20.5px;font-weight:400;color:#111;left:-230.60px;width:600px;text-align:center;">9</div>
<div class="t" style="top:613.05px;font-size:20.5px;font-weight:400;color:#111;left:-230.60px;width:600px;text-align:center;">10</div>
<div class="t" style="top:651.60px;font-size:20.5px;font-weight:400;color:#111;left:-230.60px;width:600px;text-align:center;">11</div>
<div class="t" style="top:690.15px;font-size:20.5px;font-weight:400;color:#111;left:-230.60px;width:600px;text-align:center;">12</div>
<div class="t" style="top:728.70px;font-size:20.5px;font-weight:400;color:#111;left:-230.60px;width:600px;text-align:center;">13</div>
<div class="t" style="top:767.25px;font-size:20.5px;font-weight:400;color:#111;left:-230.60px;width:600px;text-align:center;">14</div>
<div class="t" style="top:805.80px;font-size:20.5px;font-weight:400;color:#111;left:-230.60px;width:600px;text-align:center;">15</div>
<div class="t" style="top:844.35px;font-size:20.5px;font-weight:400;color:#111;left:-230.60px;width:600px;text-align:center;">16</div>
<div class="r" style="left:0.00px;top:331.60px;width:139.00px;height:2.00px;background:#d3d3d3;"></div>
<div class="r" style="left:139.00px;top:331.60px;width:1760.00px;height:2.00px;background:#dcdcdc;"></div>
<div class="r" style="left:0.00px;top:370.10px;width:139.00px;height:2.00px;background:#d3d3d3;"></div>
<div class="r" style="left:139.00px;top:370.10px;width:1760.00px;height:2.00px;background:#dcdcdc;"></div>
<div class="r" style="left:0.00px;top:408.60px;width:139.00px;height:2.00px;background:#d3d3d3;"></div>
<div class="r" style="left:139.00px;top:408.60px;width:1760.00px;height:2.00px;background:#dcdcdc;"></div>
<div class="r" style="left:0.00px;top:447.10px;width:139.00px;height:2.00px;background:#d3d3d3;"></div>
<div class="r" style="left:139.00px;top:447.10px;width:1760.00px;height:2.00px;background:#dcdcdc;"></div>
<div class="r" style="left:0.00px;top:485.60px;width:139.00px;height:2.00px;background:#d3d3d3;"></div>
<div class="r" style="left:139.00px;top:485.60px;width:1760.00px;height:2.00px;background:#dcdcdc;"></div>
<div class="r" style="left:0.00px;top:524.10px;width:139.00px;height:2.00px;background:#d3d3d3;"></div>
<div class="r" style="left:139.00px;top:524.10px;width:1760.00px;height:2.00px;background:#dcdcdc;"></div>
<div class="r" style="left:0.00px;top:562.60px;width:139.00px;height:2.00px;background:#d3d3d3;"></div>
<div class="r" style="left:139.00px;top:562.60px;width:1760.00px;height:2.00px;background:#dcdcdc;"></div>
<div class="r" style="left:0.00px;top:601.10px;width:139.00px;height:2.00px;background:#d3d3d3;"></div>
<div class="r" style="left:139.00px;top:601.10px;width:1760.00px;height:2.00px;background:#dcdcdc;"></div>
<div class="r" style="left:0.00px;top:639.60px;width:139.00px;height:2.00px;background:#d3d3d3;"></div>
<div class="r" style="left:139.00px;top:639.60px;width:1760.00px;height:2.00px;background:#dcdcdc;"></div>
<div class="r" style="left:0.00px;top:678.10px;width:139.00px;height:2.00px;background:#d3d3d3;"></div>
<div class="r" style="left:139.00px;top:678.10px;width:1760.00px;height:2.00px;background:#dcdcdc;"></div>
<div class="r" style="left:0.00px;top:716.60px;width:139.00px;height:2.00px;background:#d3d3d3;"></div>
<div class="r" style="left:139.00px;top:716.60px;width:1760.00px;height:2.00px;background:#dcdcdc;"></div>
<div class="r" style="left:0.00px;top:755.10px;width:139.00px;height:2.00px;background:#d3d3d3;"></div>
<div class="r" style="left:139.00px;top:755.10px;width:1760.00px;height:2.00px;background:#dcdcdc;"></div>
<div class="r" style="left:0.00px;top:793.60px;width:139.00px;height:2.00px;background:#d3d3d3;"></div>
<div class="r" style="left:139.00px;top:793.60px;width:1760.00px;height:2.00px;background:#dcdcdc;"></div>
<div class="r" style="left:0.00px;top:832.10px;width:139.00px;height:2.00px;background:#d3d3d3;"></div>
<div class="r" style="left:139.00px;top:832.10px;width:1760.00px;height:2.00px;background:#dcdcdc;"></div>
<div class="r" style="left:383.50px;top:296.00px;width:2.00px;height:548.30px;background:#dcdcdc;"></div>
<div class="r" style="left:537.30px;top:296.00px;width:2.00px;height:548.30px;background:#dcdcdc;"></div>
<div class="r" style="left:730.00px;top:296.00px;width:2.00px;height:548.30px;background:#dcdcdc;"></div>
<div class="r" style="left:938.00px;top:296.00px;width:2.00px;height:548.30px;background:#dcdcdc;"></div>
<div class="r" style="left:1071.50px;top:296.00px;width:2.00px;height:548.30px;background:#dcdcdc;"></div>
<div class="r" style="left:1311.00px;top:296.00px;width:2.00px;height:548.30px;background:#dcdcdc;"></div>
<div class="r" style="left:1491.70px;top:296.00px;width:2.00px;height:548.30px;background:#dcdcdc;"></div>
<div class="r" style="left:1724.30px;top:296.00px;width:2.00px;height:548.30px;background:#dcdcdc;"></div>
<div class="r" style="left:1898.00px;top:296.00px;width:2.00px;height:548.30px;background:#dcdcdc;"></div>
<div class="r" style="left:383.50px;top:227.50px;width:2.00px;height:65.00px;background:#dcdcdc;"></div>
<div class="r" style="left:537.30px;top:227.50px;width:2.00px;height:65.00px;background:#dcdcdc;"></div>
<div class="r" style="left:730.00px;top:227.50px;width:2.00px;height:65.00px;background:#dcdcdc;"></div>
<div class="r" style="left:938.00px;top:227.50px;width:2.00px;height:65.00px;background:#dcdcdc;"></div>
<div class="r" style="left:1071.50px;top:227.50px;width:2.00px;height:65.00px;background:#dcdcdc;"></div>
<div class="r" style="left:1311.00px;top:227.50px;width:2.00px;height:65.00px;background:#dcdcdc;"></div>
<div class="r" style="left:1491.70px;top:227.50px;width:2.00px;height:65.00px;background:#dcdcdc;"></div>
<div class="r" style="left:1724.30px;top:227.50px;width:2.00px;height:65.00px;background:#dcdcdc;"></div>
<div class="r" style="left:1898.00px;top:227.50px;width:2.00px;height:65.00px;background:#dcdcdc;"></div>
<div class="r" style="left:0.00px;top:291.20px;width:139.00px;height:5.40px;background:#d2d2d2;"></div>
<div class="r" style="left:139.00px;top:292.20px;width:1760.00px;height:4.10px;background:#d4d4d4;"></div>
<div class="r" style="left:139.00px;top:226.20px;width:1760.00px;height:2.10px;background:#4f96a6;"></div>
<div class="r" style="left:138.20px;top:226.20px;width:1.80px;height:618.10px;background:#3f8d9d;"></div>
<div class="r" style="left:138.20px;top:226.30px;width:246.90px;height:68.10px;background:transparent;border:3.8px solid #488e9e;box-sizing:border-box;"></div>
<div class="r" style="left:375.20px;top:285.10px;width:14.60px;height:14.50px;background:#fff;"></div>
<div class="r" style="left:376.20px;top:286.10px;width:12.60px;height:12.50px;background:#488e9e;"></div>
<div class="r" style="left:1899.00px;top:226.20px;width:19.00px;height:618.10px;background:#f7f7f7;"></div>
<div class="r" style="left:1898.50px;top:226.20px;width:1.00px;height:618.10px;background:#dedede;"></div>
<svg class="r" style="left:1900px;top:228px;" width="18" height="22" viewBox="1900 228 18 22" fill="none"><path d="M1905 244.5 l5.9 -9.9 l5.9 9.9 z" fill="#c4c4c4"/></svg>
<div class="r" style="left:1899.50px;top:251.30px;width:18.50px;height:1.00px;background:#e6e6e6;"></div>
<div class="r" style="left:1903.00px;top:256.80px;width:14.70px;height:70.00px;background:#c1c1c1;border-radius:7px;"></div>
<svg class="r" style="left:1900px;top:820px;" width="18" height="22" viewBox="1900 820 18 22" fill="none"><path d="M1905.3 829 l5.75 9.8 l5.75 -9.8 z" fill="#c4c4c4"/></svg>
<div class="r" style="left:1899.50px;top:820.50px;width:18.50px;height:1.00px;background:#e6e6e6;"></div>
<div class="r" style="left:138.70px;top:844.30px;width:1779.30px;height:25.00px;background:#f8f8f8;"></div>
<div class="r" style="left:138.70px;top:844.30px;width:1779.30px;height:2.00px;background:#dedede;"></div>
<div class="r" style="left:138.20px;top:844.30px;width:1.20px;height:25.00px;background:#dedede;"></div>
<div class="r" style="left:163.00px;top:844.30px;width:1.00px;height:25.00px;background:#e6e6e6;"></div>
<svg class="r" style="left:140px;top:846px;" width="22" height="22" viewBox="140 846 22 22" fill="none"><path d="M145 857.4 l11.2 -6.2 v12.4 z" fill="#c4c4c4"/></svg>
<div class="r" style="left:168.00px;top:850.00px;width:805.00px;height:15.60px;background:#c1c1c1;border-radius:8px;"></div>
<div class="r" style="left:1874.00px;top:844.30px;width:1.50px;height:25.00px;background:#e6e6e6;"></div>
<svg class="r" style="left:1874px;top:846px;" width="24" height="22" viewBox="1874 846 24 22" fill="none"><path d="M1892.9 857.6 l-11.1 -6 v12 z" fill="#c4c4c4"/></svg>
<div class="r" style="left:1899.00px;top:844.30px;width:1.00px;height:25.00px;background:#e6e6e6;"></div>
<div class="r" style="left:0.00px;top:869.30px;width:1918.00px;height:1.20px;background:#dcdcdc;"></div>
<div class="r" style="left:0.00px;top:870.50px;width:1918.00px;height:66.50px;background:#fafafa;"></div>
<svg class="r" style="left:25px;top:890px;" width="36" height="34" viewBox="25 890 36 34" fill="none"><path d="M42.5 896.3 v20.7 M32 906.6 h21" stroke="#222" stroke-width="2.8" fill="none"/></svg>
<svg class="r" style="left:100px;top:890px;" width="40" height="34" viewBox="100 890 40 34" fill="none"><path d="M106.3 899.2 h26.2 M106.3 906.5 h26.2 M106.3 913.8 h26.2" stroke="#222" stroke-width="2.8" fill="none"/></svg>
<div class="r" style="left:158.00px;top:879.30px;width:261.30px;height:52.50px;background:#e2e2e2;border-radius:5px;"></div>
<div class="t" style="top:893.58px;font-size:24px;font-weight:400;color:#222;letter-spacing:-0.1px;left:185.00px;">County FIPS codes</div>
<div class="t" style="top:893.58px;font-size:24px;font-weight:400;color:#a3a3a3;letter-spacing:-0.1px;left:451.00px;">County FIPS to ZIP</div>
<div class="t" style="top:893.58px;font-size:24px;font-weight:400;color:#a3a3a3;letter-spacing:-0.1px;left:713.00px;">State FIPS codes</div>
<div class="t" style="top:893.58px;font-size:24px;font-weight:400;color:#a3a3a3;letter-spacing:-0.1px;left:957.00px;">Data Sources</div>
</body></html>
